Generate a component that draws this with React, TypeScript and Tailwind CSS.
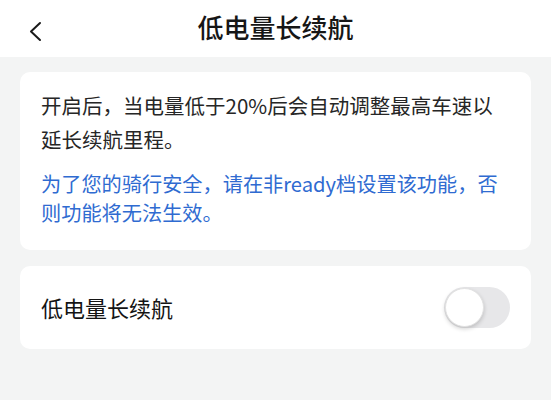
import React from "react";

const font = { fontFamily: '"Noto Sans CJK SC", "Noto Sans", sans-serif' };

export default function App() {
  return (
    <div className="w-[551px] h-[400px] bg-[#f3f4f4] flex flex-col" style={font}>
      <header className="h-[57px] bg-white grid grid-cols-[1fr_auto_1fr] items-center">
        <div className="pl-[28px] pt-[6px] flex items-center">
          <svg width="14" height="21" viewBox="0 0 14 21" fill="none">
            <path d="M12 2 L3 10.5 L12 19" stroke="#1a1a1a" strokeWidth="2" strokeLinecap="round" strokeLinejoin="round" />
          </svg>
        </div>
        <h1 className="pb-[3px] text-[26px] leading-[34px] font-medium text-[#161616]">低电量长续航</h1>
        <div />
      </header>
      <main className="flex flex-col gap-[16px] px-[20px] pt-[15px]">
        <section className="bg-white rounded-[10px] pl-[21px] pr-[16px] pt-[16px] pb-[23px]">
          <p className="text-[20.5px] leading-[34px] text-[#262626]">
            <span className="block whitespace-nowrap">开启后，当电量低于20%后会自动调整最高车速以</span>
            <span className="block whitespace-nowrap">延长续航里程。</span>
          </p>
          <p className="mt-[13px] text-[20.2px] leading-[29px] text-[#2f6bd1]">
            <span className="block whitespace-nowrap">为了您的骑行安全，请在非ready档设置该功能，否</span>
            <span className="block whitespace-nowrap">则功能将无法生效。</span>
          </p>
        </section>
        <section className="bg-white rounded-[10px] h-[83px] pl-[21px] pr-[21px] flex items-center justify-between">
          <span className="text-[22px] text-[#141414]">低电量长续航</span>
          <div className="w-[66px] h-[41px] rounded-full bg-[#e7e7e9] flex items-center pl-[1px]">
            <div className="w-[39px] h-[39px] rounded-full bg-white border border-[#e2e2e2] shadow-[0_2px_4px_rgba(0,0,0,0.18)]" />
          </div>
        </section>
      </main>
    </div>
  );
}
